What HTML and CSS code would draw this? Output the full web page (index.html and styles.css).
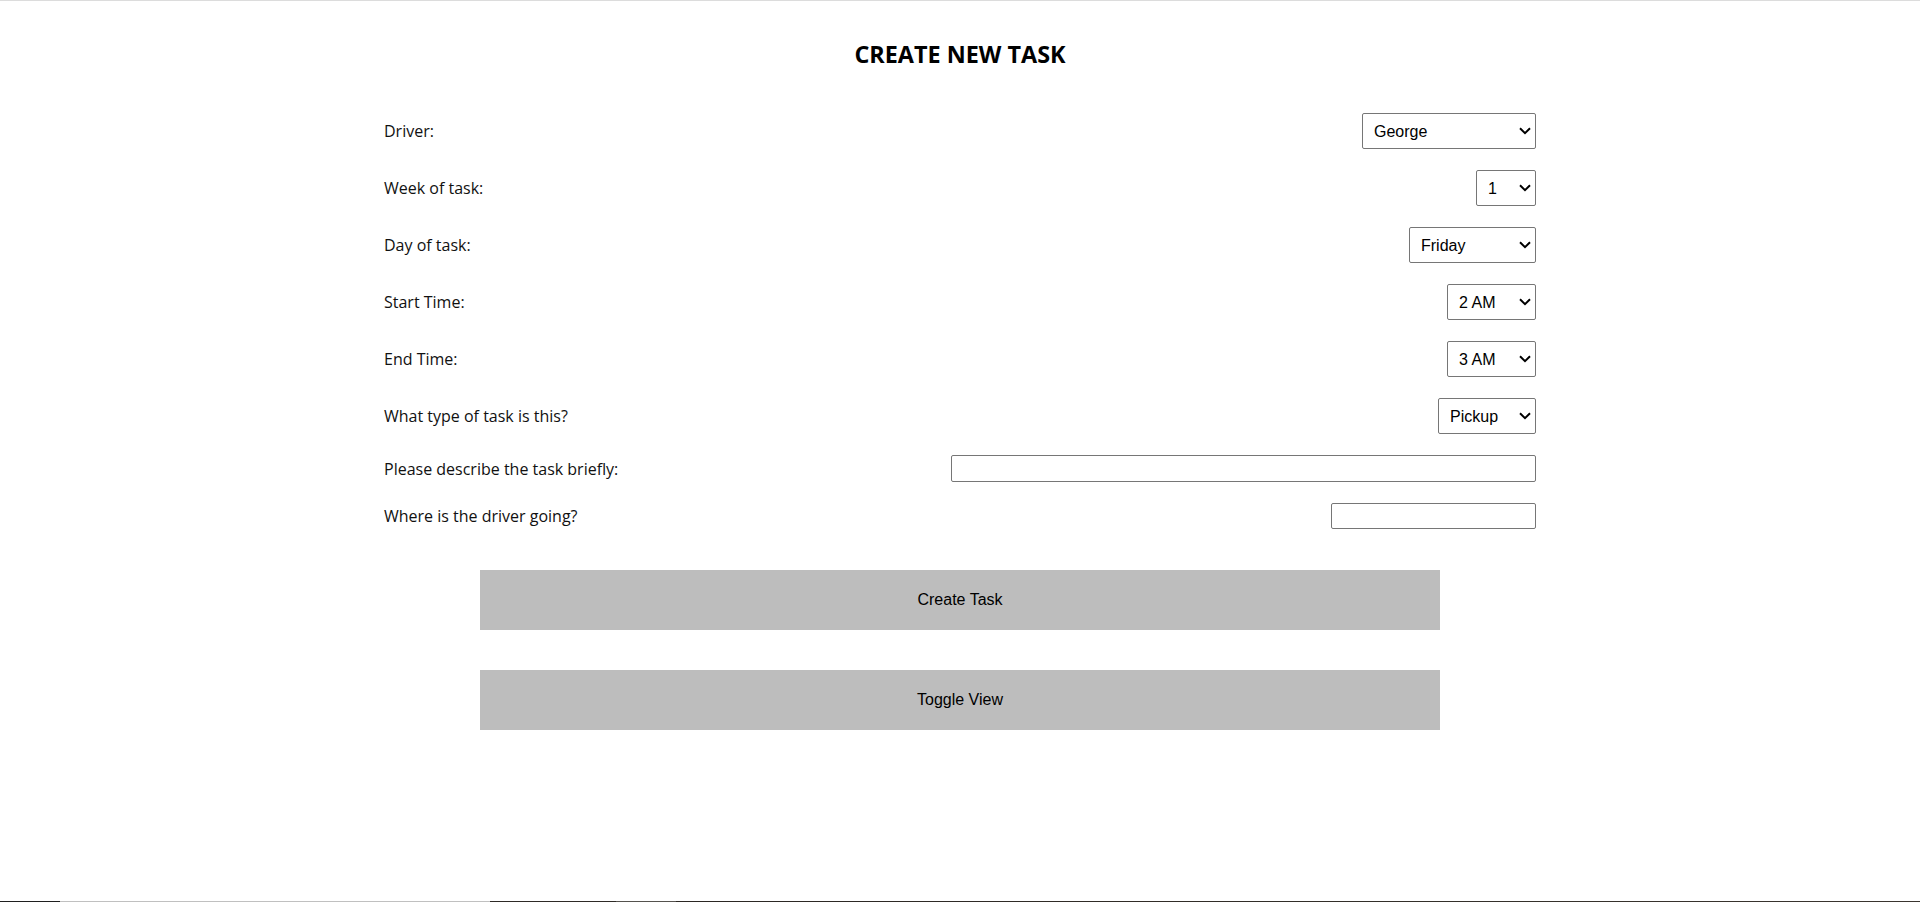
FILE: index.html
```html
<!DOCTYPE html>
<html lang="en">
<head>
<meta charset="utf-8">
<title>Create New Task</title>
<link rel="stylesheet" href="styles.css">
</head>
<body>
<div class="page">
  <h1 class="title">CREATE NEW TASK</h1>
  <form class="task-form">
    <div class="row">
      <label class="label" for="driver">Driver:</label>
      <select id="driver" class="select select-driver">
        <option>George</option>
        <option>Alexander</option>
        <option>Michael</option>
      </select>
    </div>
    <div class="row">
      <label class="label" for="week">Week of task:</label>
      <select id="week" class="select select-week">
        <option>1</option>
        <option>2</option>
        <option>3</option>
      </select>
    </div>
    <div class="row">
      <label class="label" for="day">Day of task:</label>
      <select id="day" class="select select-day">
        <option>Friday</option>
        <option>Wednesday</option>
      </select>
    </div>
    <div class="row">
      <label class="label" for="start">Start Time:</label>
      <select id="start" class="select select-time">
        <option>2 AM</option>
        <option>12 PM</option>
      </select>
    </div>
    <div class="row">
      <label class="label" for="end">End Time:</label>
      <select id="end" class="select select-time">
        <option>3 AM</option>
        <option>12 PM</option>
      </select>
    </div>
    <div class="row">
      <label class="label" for="type">What type of task is this?</label>
      <select id="type" class="select select-type">
        <option>Pickup</option>
        <option>Dropoff</option>
        <option>Other</option>
      </select>
    </div>
    <div class="row">
      <label class="label" for="desc">Please describe the task briefly:</label>
      <input id="desc" class="text-input input-wide" type="text">
    </div>
    <div class="row">
      <label class="label" for="dest">Where is the driver going?</label>
      <input id="dest" class="text-input input-short" type="text">
    </div>
  </form>
  <div class="actions">
    <button class="action-btn" type="button">Create Task</button>
    <button class="action-btn" type="button">Toggle View</button>
  </div>
</div>
<div class="bottom-strip"></div>
</body>
</html>
```

FILE: styles.css
```css
html, body {
  margin: 0;
  padding: 0;
  background: #ffffff;
}

body {
  font-family: "Open Sans", "Liberation Sans", sans-serif;
  color: #111111;
  border-top: 1px solid #dcdcdc;
}

.page {
  min-height: 900px;
  display: flex;
  flex-direction: column;
}

.title {
  margin: 38px 0 0;
  font-size: 23.4px;
  line-height: 30px;
  font-weight: 700;
  text-align: center;
  color: #000000;
}

.task-form {
  width: 60%;
  margin: 44px auto 0;
  display: flex;
  flex-direction: column;
  gap: 21px;
}

.row {
  display: flex;
  justify-content: space-between;
  align-items: center;
}

.label {
  font-size: 16px;
  line-height: 22px;
  color: #111111;
}

.select {
  -webkit-appearance: none;
  appearance: none;
  box-sizing: border-box;
  height: 36px;
  margin: 0;
  padding: 0 24px 0 11px;
  border: 1px solid #767676;
  border-radius: 2px;
  background-color: #ffffff;
  background-image: url("data:image/svg+xml;utf8,<svg xmlns='http://www.w3.org/2000/svg' width='12' height='8' viewBox='0 0 12 8'><path d='M1 1.2 L6 6.2 L11 1.2' fill='none' stroke='%23000' stroke-width='2'/></svg>");
  background-repeat: no-repeat;
  background-position: right 4px center;
  background-size: 12px 8px;
  font-family: "Liberation Sans", Arial, sans-serif;
  font-size: 16px;
  color: #000000;
}

.select-driver { width: 174px; }
.select-week { width: 60px; }
.select-day { width: 127px; }
.select-time { width: 89px; }
.select-type { width: 98px; }

.text-input {
  box-sizing: border-box;
  margin: 0;
  padding: 1px 4px;
  border: 1px solid #767676;
  border-radius: 2px;
  background: #ffffff;
  font-family: "Liberation Sans", Arial, sans-serif;
  font-size: 16px;
}

.input-wide {
  width: 585px;
  height: 27px;
}

.input-short {
  width: 205px;
  height: 26px;
}

.actions {
  display: flex;
  flex-direction: column;
  align-items: center;
  gap: 40px;
  margin-top: 41px;
}

.action-btn {
  width: 50%;
  height: 60px;
  margin: 0;
  border: none;
  border-radius: 0;
  background: #bdbdbd;
  font-family: "Liberation Sans", Arial, sans-serif;
  font-size: 16px;
  color: #000000;
}

.bottom-strip {
  height: 40px;
  background: linear-gradient(to right,
    #1f1f1f 0, #1f1f1f 60px,
    #c0c0c0 60px, #c0c0c0 490px,
    #2e2a26 490px, #2e2a26 616px,
    #55524e 616px, #55524e 676px,
    #2b2723 676px, #3a352f 100%);
}
```
